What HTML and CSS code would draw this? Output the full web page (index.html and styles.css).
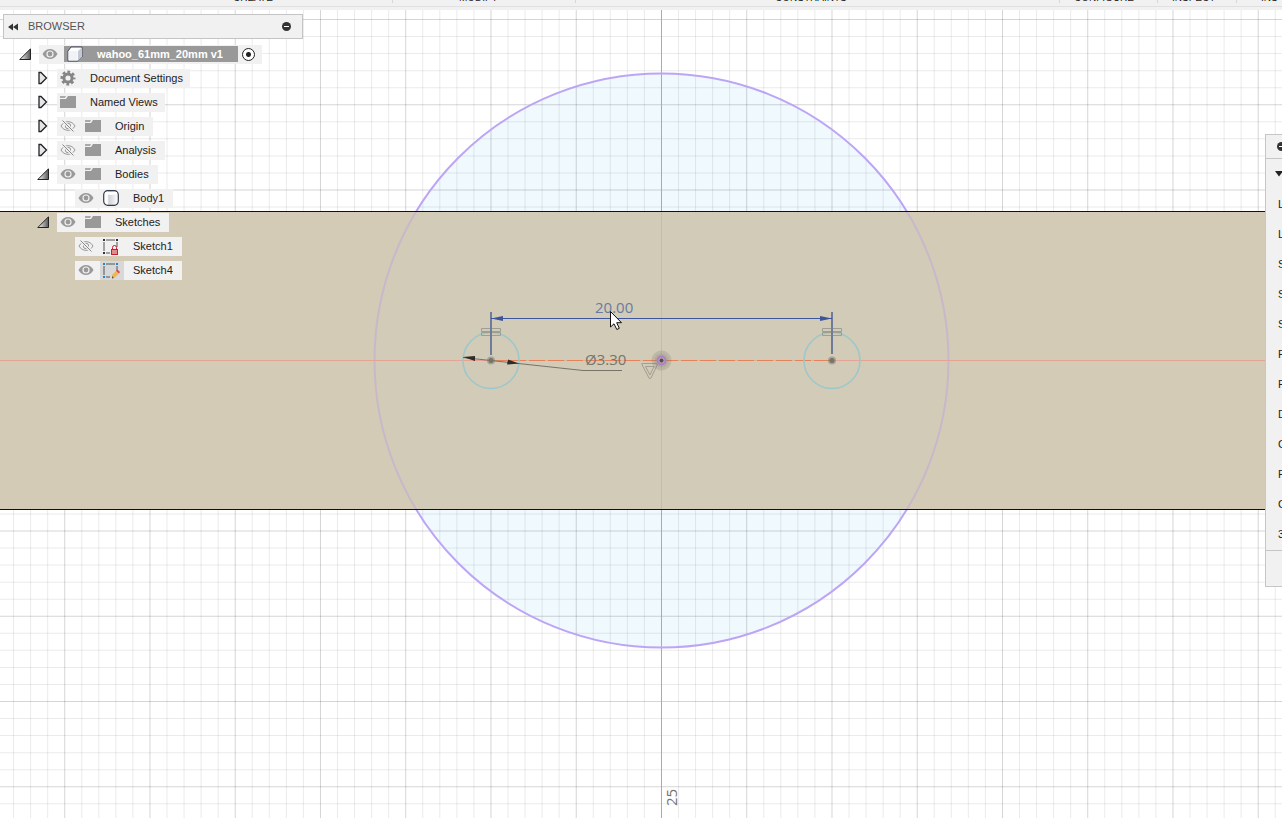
FILE: index.html
```html
<!DOCTYPE html>
<html lang="en">
<head>
<meta charset="utf-8">
<title>wahoo_61mm_20mm v1</title>
<link rel="stylesheet" href="styles.css">
</head>
<body>
<svg class="defs" width="0" height="0" aria-hidden="true">
  <defs>
    <linearGradient id="shade" x1="0" y1="0" x2="1" y2="0"><stop offset="0" stop-color="#fff"/><stop offset="1" stop-color="#555"/></linearGradient>
    <linearGradient id="steel" x1="0" y1="0" x2="1" y2="0"><stop offset="0" stop-color="#fff"/><stop offset=".25" stop-color="#fff"/><stop offset=".35" stop-color="#cfd2d9"/><stop offset="1" stop-color="#fff"/></linearGradient>
    <symbol id="open" viewBox="0 0 12 12"><path d="M11.500 .8V11.500H.8Z" fill="url(#shade)" stroke="#222"/></symbol>
    <symbol id="closed" viewBox="0 0 12 14"><path d="M2 1.500H4L9.500 7L4 12.500H2Z" fill="#e4e6ea" stroke="#222" stroke-width="1.300"/></symbol>
    <symbol id="eye" viewBox="0 0 16 12"><path d="M.5 6C4-.6 12-.6 15.500 6C12 12.600 4 12.600 .5 6Z" fill="#999"/><circle cx="8" cy="6" r="3.600" fill="#f1f1f1"/><circle cx="8" cy="6" r="2.400" fill="#999"/></symbol>
    <symbol id="eye-off" viewBox="0 0 16 12"><path d="M1 6C4 .2 12 .2 15 6C12 11.800 4 11.800 1 6Z" fill="none" stroke="#999"/><circle cx="8" cy="6" r="2.700" fill="none" stroke="#999"/><path d="M2.500 .5L13.500 11.500" stroke="#f1f1f1" stroke-width="3"/><path d="M2.500 .5L13.500 11.500" stroke="#888"/></symbol>
    <symbol id="folder" viewBox="0 0 16 14"><path d="M0 1H6L5 3H0Z" fill="#aaa"/><path d="M0 4H6L8 1H16V13H0Z" fill="#999"/></symbol>
    <symbol id="gear" viewBox="0 0 16 16"><circle cx="8" cy="8" r="6.200" fill="none" stroke="#858585" stroke-width="2.600" stroke-dasharray="2.700 2.170" stroke-dashoffset="1.350"/><circle cx="8" cy="8" r="4.100" fill="none" stroke="#858585" stroke-width="3"/></symbol>
    <symbol id="box" viewBox="0 0 16 16"><path d="M4 1H15V11L11 15H1V5Z" fill="#fff" stroke="#444b5a" stroke-linejoin="round"/><path d="M1.500 5H10.500V14.500H1.500Z" fill="#f1f2f5"/><path d="M11 5L15 1.500V11L11 15Z" fill="#c5c8d2"/></symbol>
    <symbol id="body" viewBox="0 0 16 16"><rect x=".7" y=".7" width="14.600" height="14.600" rx="4" fill="url(#steel)" stroke="#343b4c" stroke-width="1.200"/><path d="M2 3C3 5.500 13 5.500 14 3V2H2Z" fill="#fff"/></symbol>
    <symbol id="frame" viewBox="0 0 18 18"><path d="M4 2H13M2 4V13M15 4V9M4 15H8" fill="none" stroke="#555"/></symbol>
  </defs>
</svg>

<div class="app">
  <svg class="canvas" viewBox="0 0 1282 818" preserveAspectRatio="xMidYMid slice" role="img" aria-label="Sketch canvas">
    <circle cx="661.500" cy="360.500" r="287" fill="#f0f9fe"/>
    <g stroke="#000" fill="none">
      <path d="M-4 409H1282" stroke-width="818" stroke-opacity=".08" stroke-dasharray="1 16.050"/>
      <path d="M-21 409H1282" stroke-width="818" stroke-opacity=".09" stroke-dasharray="1 84.250"/>
      <path d="M641 1.950V818" stroke-width="1282" stroke-opacity=".08" stroke-dasharray="1 16.050"/>
      <path d="M641 19V818" stroke-width="1282" stroke-opacity=".09" stroke-dasharray="1 84.250"/>
    </g>
    <path d="M661.500 0V818" stroke="#77cf77"/>
    <circle cx="661.500" cy="360.500" r="287" fill="none" stroke="#bda5f5" stroke-width="2"/>

    <path d="M-400 211H1682V510H-400Z" fill="#d4cbb7"/>
    <svg x="0" y="212" width="1282" height="297" viewBox="0 212 1282 297">
      <circle cx="661.500" cy="360.500" r="287" fill="#d1cbb7" stroke="#c9b8ca" stroke-width="2"/>
    </svg>
    <path d="M-400 211.500H1682M-400 509.500H1682" stroke="#111"/>
    <path d="M661.500 212V509" stroke="#a9cf98"/>
    <path d="M-400 360.500H1682" stroke="#e5a393"/>
    <path d="M491 360.500H832" stroke="#d3b79f"/>
    <path d="M491 360.500H832" stroke="#e58258" stroke-dasharray="16 3"/>

    <g fill="none" stroke="#9cc7cc" stroke-width="1.500">
      <circle cx="491" cy="360.500" r="28"/>
      <circle cx="832" cy="360.500" r="28"/>
    </g>
    <g fill="none" stroke="#9b9f94">
      <path d="M481.500 328.500h19v3h-19zM481.500 332.500h19v3h-19z"/>
      <path d="M822.500 328.500h19v3h-19zM822.500 332.500h19v3h-19z"/>
    </g>
    <path d="M491 312V355M832 312V354" stroke="#6e7b9b" stroke-width="2"/>
    <path d="M491 318.500H832" stroke="#3d559b"/>
    <path d="M491 318.500L503 316V321ZM832 318.500L820 316V321Z" fill="#3d559b"/>
    <g fill="#77746b"><circle cx="491" cy="360.500" r="4" opacity=".45"/><circle cx="832" cy="360.500" r="4" opacity=".45"/><circle cx="491" cy="360.500" r="2.500"/><circle cx="832" cy="360.500" r="2.500"/></g>

    <path d="M463 357.500L583 370.500H622" fill="none" stroke="#77736a"/>
    <path d="M463 357L475 356V361ZM519 363.500L508 359.500L507 364.500Z" fill="#2c2c2a"/>
    <path d="M642 364.500Q641 363.500 643 363.500H656Q658 363.500 657 365.500L651 378Q650 379.500 649 378ZM645.500 366.500H654L650 375Z" fill="none" stroke="#a29e92"/>
    <circle cx="661.500" cy="360.500" r="10" fill="#77736a" opacity=".22"/>
    <circle cx="661.500" cy="360.500" r="7" fill="#77736a" opacity=".15"/>
    <circle cx="661.500" cy="360.500" r="4" fill="#b6a3b2" stroke="#aa82c4" stroke-width="2"/>
    <circle cx="661.500" cy="360.500" r="2" fill="#5b4b4c"/>

    <text class="dim dim-active" x="595" y="313">20.00</text>
    <text class="dim" x="585" y="365">Ø3.30</text>
    <text class="dim" transform="translate(677 806) rotate(-90)">25</text>
    <path d="M610.500 311.500V327L614 323.800L616.800 329.500L619.300 328.300L616.700 322.700H621.500Z" fill="#fff" stroke="#111"/>
  </svg>

  <header class="toolbar">
    <button class="tool create">CREATE</button>
    <button class="tool modify">MODIFY</button>
    <button class="tool constraints">CONSTRAINTS</button>
    <button class="tool configure">CONFIGURE</button>
    <button class="tool inspect">INSPECT</button>
    <button class="tool insert">INS</button>
  </header>

  <main class="workspace">
    <section class="browser">
      <div class="browser-head">
        <svg width="10" height="8" viewBox="0 0 10 8"><path d="M5 .5V7.500L0 4ZM10 .5V7.500L5 4Z" fill="#333"/></svg>
        <h1>BROWSER</h1>
        <button class="minus" aria-label="Collapse"></button>
      </div>
      <ul class="tree">
        <li class="row root">
          <svg class="arrow" width="12" height="12"><use href="#open"/></svg>
          <div class="chip">
            <svg width="16" height="12"><use href="#eye"/></svg>
            <span class="selected"><svg width="16" height="16"><use href="#box"/></svg><b>wahoo_61mm_20mm v1</b></span>
            <input type="radio" checked aria-label="Active component">
          </div>
        </li>
        <li class="row">
          <svg class="arrow" width="12" height="14"><use href="#closed"/></svg>
          <div class="chip setting"><svg width="16" height="16"><use href="#gear"/></svg><span>Document Settings</span></div>
        </li>
        <li class="row">
          <svg class="arrow" width="12" height="14"><use href="#closed"/></svg>
          <div class="chip setting"><svg width="16" height="14"><use href="#folder"/></svg><span>Named Views</span></div>
        </li>
        <li class="row">
          <svg class="arrow" width="12" height="14"><use href="#closed"/></svg>
          <div class="chip"><svg width="16" height="12"><use href="#eye-off"/></svg><svg class="kind" width="16" height="14"><use href="#folder"/></svg><span>Origin</span></div>
        </li>
        <li class="row">
          <svg class="arrow" width="12" height="14"><use href="#closed"/></svg>
          <div class="chip"><svg width="16" height="12"><use href="#eye-off"/></svg><svg class="kind" width="16" height="14"><use href="#folder"/></svg><span>Analysis</span></div>
        </li>
        <li class="row">
          <svg class="arrow" width="12" height="12"><use href="#open"/></svg>
          <div class="chip"><svg width="16" height="12"><use href="#eye"/></svg><svg class="kind" width="16" height="14"><use href="#folder"/></svg><span>Bodies</span></div>
        </li>
        <li class="row leaf">
          <div class="chip"><svg width="16" height="12"><use href="#eye"/></svg><svg class="kind" width="16" height="16"><use href="#body"/></svg><span>Body1</span></div>
        </li>
        <li class="row">
          <svg class="arrow" width="12" height="12"><use href="#open"/></svg>
          <div class="chip"><svg width="16" height="12"><use href="#eye"/></svg><svg class="kind" width="16" height="14"><use href="#folder"/></svg><span>Sketches</span></div>
        </li>
        <li class="row leaf">
          <div class="chip"><svg width="16" height="12"><use href="#eye-off"/></svg>
            <svg class="kind wide" viewBox="-2 -1 24 19"><use href="#frame" width="18" height="18"/><path d="M1 1h2v2H1zM14 1h2v2h-2zM1 14h2v2H1z" fill="#333"/><path d="M10.500 11V9.500a2 2 0 0 1 4 0V11" fill="none" stroke="#c8202b"/><rect x="9.500" y="11.500" width="6" height="5" fill="#dd8d91" stroke="#c8202b"/></svg>
            <span>Sketch1</span></div>
        </li>
        <li class="row leaf">
          <div class="chip"><svg width="16" height="12"><use href="#eye"/></svg>
            <svg class="kind wide editing" viewBox="-2 -1 24 19"><use href="#frame" width="18" height="18"/><path d="M1 1h2v2H1zM14 1h2v2h-2zM1 14h2v2H1z" fill="#168ae0"/><path d="M10 13L14 9L17 11.500L13 15.500L10 16Z" fill="#f2b64d"/><path d="M14 9L15.500 7.500L18 10L17 11.500Z" fill="#e0454f"/><path d="M10 14V16.500L12 16Z" fill="#555"/></svg>
            <span>Sketch4</span></div>
        </li>
      </ul>
    </section>

    <aside class="palette">
      <div class="palette-head"><button class="minus" aria-label="Collapse"></button></div>
      <div class="palette-title"><svg width="8" height="6" viewBox="0 0 8 6"><path d="M0 0H8L4 5.500Z" fill="#222"/></svg></div>
      <ul class="options">
        <li>L</li><li>L</li><li>S</li><li>S</li><li>S</li><li>P</li><li>P</li><li>D</li><li>C</li><li>P</li><li>C</li><li>3</li>
      </ul>
      <div class="palette-foot"></div>
    </aside>
  </main>
</div>
</body>
</html>
```
FILE: styles.css
```css
* { box-sizing: border-box; }
body {
  margin: 0;
  background: #fff;
  color: #222;
  font: 11px/18px "Liberation Sans", Arial, sans-serif;
}
button { padding: 0; border: 0; background: none; font: inherit; color: inherit; }
ul { margin: 0; padding: 0; list-style: none; }
.defs { position: absolute; }
.app {
  display: grid;
  grid-template: 10px 1fr / minmax(0, 1fr);
  height: 100vh;
  overflow: hidden;
}
.canvas { grid-area: 1 / 1 / 3 / 2; width: 100%; height: 100%; min-height: 0; }
.dim { font: 400 15px "Open Sans", "Noto Sans", sans-serif; fill: #77746c; }
.dim-active { fill: #6b7a9f; }

.toolbar {
  grid-area: 1 / 1;
  display: grid;
  grid-template-columns: 393fr 183fr 484fr 98fr 79fr 45fr;
  background: linear-gradient(#e0e0e0, #e0e0e0) 0 6px / 100% 1px no-repeat #f1f1f1;
  overflow: hidden;
}
.tool {
  display: flex;
  align-items: flex-end;
  height: 3px;
  line-height: 10px;
  font-size: 10px;
  text-align: left;
  overflow: hidden;
  border-right: 1px solid #d8d8d8;
}
.create { padding-left: 233px; }
.modify { padding-left: 66px; }
.constraints { padding-left: 199px; }
.configure { padding-left: 14px; }
.inspect { padding-left: 14px; }
.insert { padding-left: 24px; border-right: 0; }

.workspace {
  grid-area: 2 / 1;
  display: flex;
  justify-content: space-between;
  align-items: flex-start;
  z-index: 1;
}
.browser { width: 300px; margin: 4px 0 0 3px; }
.browser-head {
  display: flex;
  align-items: center;
  height: 25px;
  padding: 0 11px 0 4px;
  border: 1px solid #c4c4c4;
  background: #f1f1f1;
}
.browser-head h1 { flex: 1; margin: 0 0 0 10px; font-size: 11px; line-height: 16px; padding-bottom: 1px; font-weight: 400; color: #555; }
.minus {
  flex: none;
  display: grid;
  place-items: center;
  width: 9px;
  height: 9px;
  border-radius: 50%;
  background: #333;
}
.minus::before { content: ""; width: 5px; height: 1px; background: #fff; }

.tree { padding-top: 3px; }
.row { display: flex; align-items: center; height: 24px; padding-left: 34px; }
.root { padding-left: 16px; }
.leaf { padding-left: 72px; }
.arrow { flex: none; margin-right: 8px; }
.chip {
  display: flex;
  align-items: center;
  height: 19px;
  padding: 0 9px 0 3px;
  background: #f1f1f1;
  white-space: nowrap;
}
.chip span { margin-left: 14px; }
.setting { padding-right: 7px; }
.kind { margin-left: 9px; }
.chip .wide { width: 24px; height: 19px; margin: 0 -5px 0 6px; }
.editing { background: #d8d8d8; }
.root .chip { padding-right: 7px; }
.chip .selected {
  display: flex;
  align-items: center;
  height: 16px;
  margin: 0 4px 0 6px;
  padding: 0 15px 0 3px;
  background: #999;
  color: #fff;
}
.selected b { margin-left: 14px; }
.chip input {
  appearance: none;
  width: 13px;
  height: 13px;
  margin: 0;
  border: 1px solid #222;
  border-radius: 50%;
  background: radial-gradient(circle, #222 0 2px, #fff 3px);
}

.palette {
  width: 17px;
  margin-top: 124px;
  border: 1px solid #c6c6c6;
  border-right: 0;
  background: #f1f1f1;
  overflow: hidden;
}
.palette-head { display: flex; align-items: center; height: 24px; padding-left: 11px; border-bottom: 1px solid #c6c6c6; }
.palette-title { display: flex; align-items: center; height: 30px; padding-left: 9px; }
.palette-title svg { flex: none; }
.options { padding-bottom: 1px; }
.options li { height: 30px; padding-left: 12px; line-height: 30px; }
.palette-foot { height: 36px; border-top: 1px solid #c6c6c6; }
```
